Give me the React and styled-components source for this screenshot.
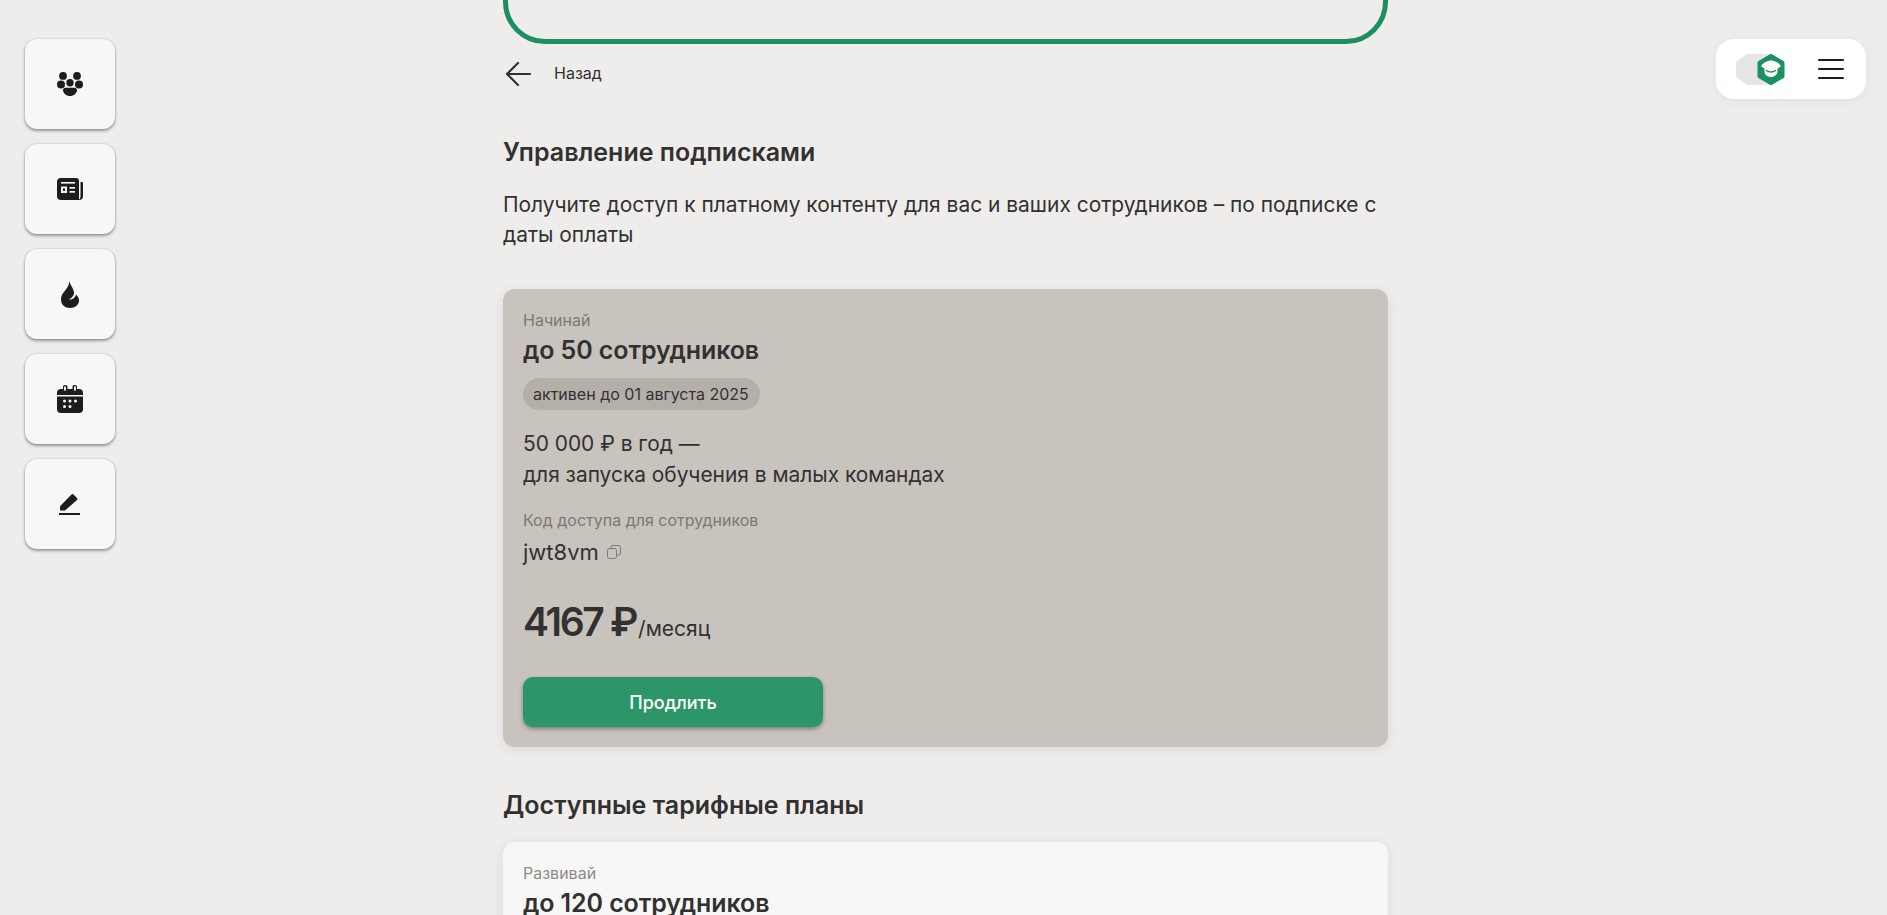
import styled, { createGlobalStyle } from "styled-components";

const GlobalStyle = createGlobalStyle`
  html, body {
    margin: 0;
    padding: 0;
    height: 100%;
    overflow: hidden;
    background: #eeedeb;
    font-family: "Inter", "Noto Sans", sans-serif;
    color: #333130;
  }
`;

const sideItems = ["team", "news", "fire", "calendar", "edit"];

const SideIcon = ({ name }) => {
  switch (name) {
    case "team":
      return (
        <svg width="26" height="24" viewBox="0 0 26 24" fill="#1d1d1f">
          <circle cx="6" cy="3.900" r="3.900" />
          <circle cx="20" cy="3.900" r="3.900" />
          <ellipse cx="4" cy="12.500" rx="4" ry="3.900" />
          <ellipse cx="22" cy="12.500" rx="4" ry="3.900" />
          <circle cx="13" cy="10.800" r="3.700" />
          <path d="M8.500 15.700h9c1.500 0 2.500 1 2.500 2.300 0 3.300-3.200 6-7 6s-7-2.700-7-6c0-1.300 1-2.300 2.500-2.300z" />
        </svg>
      );
    case "news":
      return (
        <svg width="26" height="22" viewBox="0 0 26 22" fill="#1d1d1f">
          <path d="M4 0h15a3 3 0 0 1 3 3v19H4a4 4 0 0 1-4-4V4a4 4 0 0 1 4-4z" />
          <path d="M23.500 4H25a1 1 0 0 1 1 1v13a4 4 0 0 1-4 4h-.5c1.300-.8 2-2 2-4z" />
          <rect x="4" y="4" width="14" height="1.600" fill="#f7f7f7" />
          <path d="M4 8.500h6v6.500H4zm2 2v2.500h2v-2.500z" fill="#f7f7f7" fillRule="evenodd" />
          <rect x="12.500" y="9" width="5.500" height="1.700" fill="#f7f7f7" />
          <rect x="12.500" y="13" width="5.500" height="1.700" fill="#f7f7f7" />
        </svg>
      );
    case "fire":
      return (
        <svg width="18" height="27" viewBox="0 0 18 27" fill="#1d1d1f">
          <path d="M8 0C9 4 12.500 7 13 11 13.500 14 11 17 8 18.500 11 19 14 17.500 15 13.500 17 15.500 18 17.500 18 19.500 18 24 14 27 9 27 4 27 0 23.500 0 18.500 0 14 2.500 11.500 4.500 9 6.500 6.500 8.500 3.500 8 0z" />
        </svg>
      );
    case "calendar":
      return (
        <svg width="26" height="28" viewBox="0 0 26 28" fill="#1d1d1f">
          <path d="M0 8a4 4 0 0 1 4-4h2V2a2 2 0 0 1 2.500-2C10 .3 10.500 1 10.500 2v2h5V2a2 2 0 0 1 2.500-2c1.500.3 2 1 2 2v2h2a4 4 0 0 1 4 4v2H0z" />
          <path d="M0 11.500h26V24a4 4 0 0 1-4 4H4a4 4 0 0 1-4-4z" />
          <g fill="#f7f7f7">
            <circle cx="7.500" cy="16" r="1.500" />
            <circle cx="13" cy="16" r="1.500" />
            <circle cx="18.500" cy="16" r="1.500" />
            <circle cx="7.500" cy="21.500" r="1.500" />
            <circle cx="13" cy="21.500" r="1.500" />
          </g>
          <ellipse cx="8" cy="3.500" rx="1" ry="2.500" fill="#f7f7f7" />
          <ellipse cx="18" cy="3.500" rx="1" ry="2.500" fill="#f7f7f7" />
        </svg>
      );
    default:
      return (
        <svg width="22" height="22" viewBox="0 0 22 22" fill="#1d1d1f">
          <path d="M1 17.500v-4.300L12.500 1.500a1.500 1.500 0 0 1 2 0L18 5a1.500 1.500 0 0 1 0 2L6 17.500z" />
          <rect x="0" y="20" width="21" height="2" />
        </svg>
      );
  }
};

const App = () => {
  return (
    <>
      <GlobalStyle />
      <Page>
        <SideRail>
          {sideItems.map((name) => (
            <SideButton key={name}>
              <SideIcon name={name} />
            </SideButton>
          ))}
        </SideRail>

        <Main>
          <Promo />
          <BackRow>
            <svg width="26" height="26" viewBox="0 0 26 26" fill="none" stroke="#333130" strokeWidth="2.200" strokeLinecap="round" strokeLinejoin="round">
              <path d="M25 13H2M13 2 2 13l11 11" />
            </svg>
            <span>Назад</span>
          </BackRow>

          <Heading>Управление подписками</Heading>
          <Lead>
            Получите доступ к платному контенту для вас и ваших сотрудников – по подписке с даты оплаты
          </Lead>

          <PlanCard $active>
            <PlanTag $active>Начинай</PlanTag>
            <PlanTitle>до 50 сотрудников</PlanTitle>
            <Badge>активен до 01 августа 2025</Badge>
            <PlanText>
              50 000 ₽ в год —
              <br />
              для запуска обучения в малых командах
            </PlanText>
            <CodeLabel>Код доступа для сотрудников</CodeLabel>
            <CodeRow>
              jwt8vm
              <svg width="14" height="14" viewBox="0 0 14 14" fill="none" stroke="#7d7873" strokeWidth="1">
                <rect x="0.500" y="3.500" width="9" height="10" rx="2" />
                <path d="M4 3.500V2.500a2 2 0 0 1 2-2h5.500a2 2 0 0 1 2 2V8a2 2 0 0 1-2 2h-2" />
              </svg>
            </CodeRow>
            <PriceRow>
              <Price>4167 ₽</Price>
              <PriceUnit>/месяц</PriceUnit>
            </PriceRow>
            <RenewButton>Продлить</RenewButton>
          </PlanCard>

          <SubHeading>Доступные тарифные планы</SubHeading>

          <PlanCard>
            <PlanTag>Развивай</PlanTag>
            <PlanTitle>до 120 сотрудников</PlanTitle>
          </PlanCard>
        </Main>

        <TopWidget>
          <svg width="50" height="31" viewBox="0 0 50 31">
            <path d="M11 0h24v31H11L0 23V8z" fill="#e6e5e3" />
            <path d="M35 2l11.500 6.700v13.600L35 29l-11.500-6.700V8.700z" fill="#1c9060" stroke="#1c9060" strokeWidth="4" strokeLinejoin="round" />
            <path d="M35 6.500c3 0 8 2.300 9.500 5 .3.500.3 1 0 1.300L41.500 14.500v3c0 3-3 5.500-6.500 5.500s-6.500-2.500-6.500-5.500v-3l-3-1.700c-.3-.3-.3-.8 0-1.300 1.500-2.700 6.500-5 9.500-5z" fill="#fff" />
            <path d="M30.500 16.500c2.500 2 6.500 2 9 0" fill="none" stroke="#1c9060" strokeWidth="1.400" strokeLinecap="round" />
          </svg>
          <MenuIcon>
            <span />
            <span />
            <span />
          </MenuIcon>
        </TopWidget>
      </Page>
    </>
  );
};

const Page = styled.div`
  display: grid;
  grid-template-columns: 503px 885px 1fr;
  height: 100vh;
  overflow: hidden;
`;

const SideRail = styled.nav`
  display: flex;
  flex-direction: column;
  gap: 15px;
  padding: 39px 0 0 25px;
`;

const SideButton = styled.button`
  display: flex;
  align-items: center;
  justify-content: center;
  width: 90px;
  height: 90px;
  padding: 0;
  border: none;
  border-radius: 12px;
  background: #f7f7f7;
  box-shadow: 0 2px 3px rgba(60, 55, 50, 0.45), 0 0 2px rgba(60, 55, 50, 0.25);
`;

const Main = styled.main`
  display: flex;
  flex-direction: column;
  align-items: flex-start;
`;

const Promo = styled.div`
  box-sizing: border-box;
  flex: none;
  width: 100%;
  height: 144px;
  margin-top: -100px;
  border: 5px solid #1a8f61;
  border-radius: 42px;
`;

const BackRow = styled.div`
  display: flex;
  align-items: center;
  gap: 23px;
  margin: 16px 0 0 2px;
  font-size: 16px;
  line-height: 27px;
`;

const Heading = styled.h1`
  margin: 49px 0 0;
  font-size: 25px;
  font-weight: 600;
  line-height: 32px;
`;

const SubHeading = styled(Heading)`
  margin-top: 42px;
`;

const Lead = styled.p`
  margin: 22px 0 0;
  font-size: 20.950px;
  line-height: 30px;
`;

const PlanCard = styled.section`
  box-sizing: border-box;
  flex: none;
  display: flex;
  flex-direction: column;
  align-items: flex-start;
  width: 100%;
  margin-top: ${(props) => (props.$active ? "39px" : "21px")};
  padding: 20px;
  border-radius: 12px;
  background: ${(props) => (props.$active ? "#c8c3bd" : "#f7f7f7")};
  box-shadow: 0 3px 12px rgba(60, 55, 50, 0.1);
`;

const PlanTag = styled.div`
  font-size: 16px;
  line-height: 22px;
  color: ${(props) => (props.$active ? "#7d7873" : "#8f8b85")};
`;

const PlanTitle = styled.h2`
  margin: 3px 0 0;
  font-size: 25px;
  font-weight: 600;
  line-height: 32px;
  letter-spacing: -0.1px;
`;

const Badge = styled.div`
  margin-top: 12px;
  padding: 0 11px 0 10px;
  border-radius: 16px;
  background: #b5afa9;
  font-size: 16px;
  line-height: 32px;
`;

const PlanText = styled.p`
  margin: 18px 0 0;
  font-size: 20.900px;
  line-height: 31px;
`;

const CodeLabel = styled.div`
  margin-top: 19px;
  font-size: 16px;
  line-height: 22px;
  color: #7d7873;
`;

const CodeRow = styled.div`
  display: flex;
  align-items: center;
  gap: 8px;
  margin-top: 6px;
  font-size: 22px;
  line-height: 30px;
`;

const PriceRow = styled.div`
  display: flex;
  align-items: baseline;
  gap: 2px;
  margin-top: 31px;
`;

const Price = styled.span`
  font-size: 39px;
  font-weight: 600;
  line-height: 48px;
  letter-spacing: -2.300px;
`;

const PriceUnit = styled.span`
  font-size: 21px;
`;

const RenewButton = styled.button`
  width: 300px;
  height: 50px;
  margin-top: 31px;
  border: none;
  border-radius: 10px;
  background: #2c9669;
  box-shadow: 0 2px 4px rgba(40, 40, 40, 0.45);
  color: #fff;
  font-family: inherit;
  font-size: 18px;
  font-weight: 500;
`;

const TopWidget = styled.div`
  box-sizing: border-box;
  display: flex;
  align-items: center;
  justify-content: space-between;
  justify-self: end;
  width: 150px;
  height: 60px;
  margin: 39px 21px 0 0;
  padding: 0 22px 0 20px;
  border-radius: 18px;
  background: #fff;
  box-shadow: 0 2px 10px rgba(60, 55, 50, 0.06);
`;

const MenuIcon = styled.div`
  display: flex;
  flex-direction: column;
  gap: 6.500px;
  width: 26px;
  span {
    height: 2.500px;
    border-radius: 1px;
    background: #1d1d1f;
  }
`;

export default App;
